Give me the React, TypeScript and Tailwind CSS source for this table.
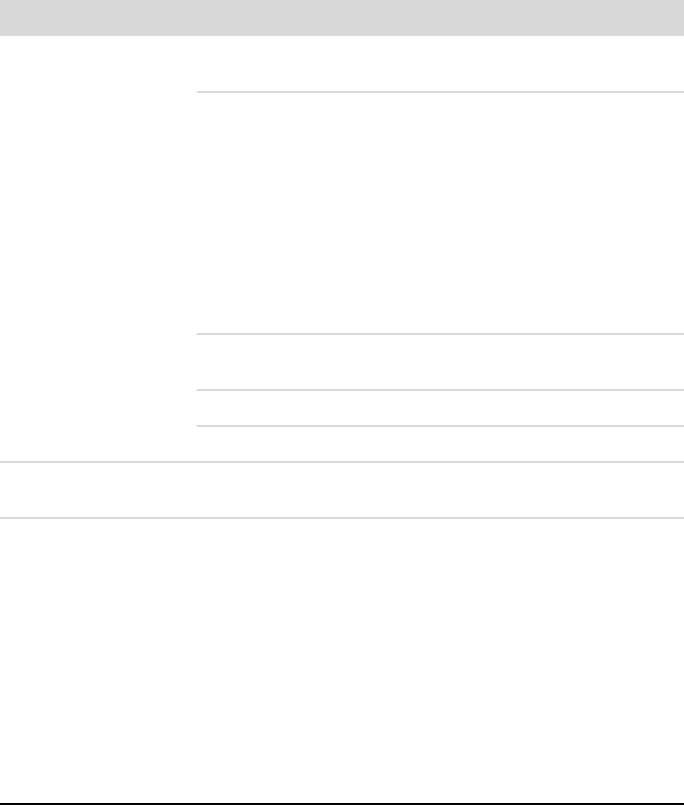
export default function App() {
  return (
    <div className="w-[684px] h-[805px] bg-white flex flex-col" style={{ fontFamily: '"Liberation Sans", Arial, sans-serif' }}>
      <div className="h-[36px] bg-[#d9d9d9] shrink-0" />
      <div className="flex shrink-0">
        <div className="w-[197px] shrink-0" />
        <div className="flex-1 flex flex-col">
          <div className="h-[57px] border-b-2 border-[#d9d9d9]" />
          <div className="h-[242px] border-b-2 border-[#d9d9d9]" />
          <div className="h-[56px] border-b-2 border-[#d9d9d9]" />
          <div className="h-[36px] border-b-2 border-[#d9d9d9]" />
          <div className="h-[34px]" />
        </div>
      </div>
      <div className="h-[2px] bg-[#d9d9d9] shrink-0" />
      <div className="h-[54px] shrink-0" />
      <div className="h-[2px] bg-[#d9d9d9] shrink-0" />
      <div className="flex-1" />
      <div className="h-[2px] bg-black shrink-0" />
    </div>
  );
}
